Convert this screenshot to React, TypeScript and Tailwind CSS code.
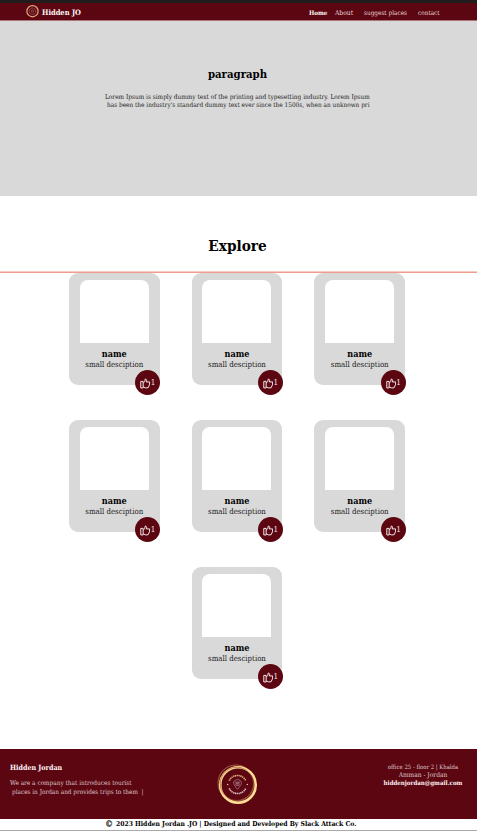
import React from "react";

function ThumbIcon() {
  return (
    <svg viewBox="0 0 20 20" className="h-[11px] w-[10.5px] shrink-0" fill="none" stroke="#f3e6e7" strokeWidth="1.9" strokeLinejoin="round">
      <path d="M1.500 6H6V18.500H1.500ZM6 9L9 6.500L10 1.500C12.500 1.500 13.500 4 12 7H18.500L18 12.500L15.500 18L11 18.500L6 16.500" />
    </svg>
  );
}

function Card() {
  return (
    <article className="relative h-[111.500px] w-[90.500px] rounded-[9px] bg-[#d9d9d9] pt-[7px] text-center">
      <div className="ml-[10.500px] h-[63px] w-[69px] rounded-t-[8px] bg-white" />
      <h3 className="mt-[6px] text-[9px] leading-[11px] font-bold whitespace-nowrap">name</h3>
      <p className="-mt-[1px] text-[7.800px] leading-[11px] whitespace-nowrap text-[#222]">small desciption</p>
      <button className="absolute -right-[0.800px] -bottom-[10px] flex h-[25px] w-[25px] items-center justify-center rounded-full bg-[#5b0611] pt-[2px] text-[8px] leading-none text-[#f3e6e7]">
        <ThumbIcon />
        <span>1</span>
      </button>
    </article>
  );
}

function Seal({ className }: { className: string }) {
  return (
    <svg viewBox="0 0 42 42" className={className} fill="none">
      <circle cx="19.500" cy="19.500" r="18.500" stroke="#b87955" strokeWidth=".8" />
      <circle cx="21.500" cy="21.500" r="18.200" stroke="#ffdc94" strokeWidth="2.700" />
      <circle cx="20.300" cy="20.300" r="17" stroke="#9c5c42" strokeWidth=".7" />
      <path d="M12.500 17A9.500 9.500 0 0 1 29.500 17" stroke="#d9a778" strokeWidth="1.700" strokeDasharray="1.400 .5" />
      <path d="M12.500 25A9.500 9.500 0 0 0 29.500 25" stroke="#d6bcc6" strokeWidth="1.700" strokeDasharray="1.400 .5" />
      <circle cx="11" cy="21" r=".7" fill="#ffdc94" />
      <circle cx="31" cy="21" r=".7" fill="#ffdc94" />
      <path d="M21 26C18.500 22.500 17 21.500 17 19.500C17 14.800 25 14.800 25 19.500C25 21.500 23.500 22.500 21 26ZM18 18L23.500 21M24 18L18.500 21M19 22H23" stroke="#a8747d" strokeWidth=".8" />
      <circle cx="21" cy="19.500" r="1.500" stroke="#a8747d" strokeWidth=".6" />
    </svg>
  );
}

export default function App() {
  return (
    <div className="h-[831px] w-[477px] overflow-hidden bg-white font-['DejaVu_Serif_Condensed','DejaVu_Serif',serif] text-black">
      <header className="flex h-[21px] items-start border-t-[3px] border-b border-t-[#231c1d] border-b-[#a9767c] bg-[#5b0611] pl-[26px] text-[6.500px] whitespace-nowrap text-[#ead9da]">
        <svg viewBox="0 0 13 13" className="mt-[2px] h-[13px] w-[13px]" fill="none">
          <circle cx="6.500" cy="6.200" r="5.600" stroke="#e2ad7c" strokeWidth="1.200" />
          <circle cx="6.500" cy="6.200" r="3.200" stroke="#a8626b" strokeWidth="1" strokeDasharray="1.200 .4" />
          <circle cx="6.500" cy="6.200" r="1.200" stroke="#9b5760" strokeWidth=".9" />
        </svg>
        <strong className="mt-[5px] ml-[3px] w-[267px] text-[7.500px] leading-[10px] text-[#fff6f6]">Hidden JO</strong>
        <nav className="mt-[5px] flex leading-[10px]">
          <strong className="w-[26px] text-[6.200px] text-white">Home</strong>
          <span className="w-[29px] text-[6.700px]">About</span>
          <span className="w-[54px] text-[6.400px]">suggest places</span>
          <span className="text-[6.400px]">contact</span>
        </nav>
      </header>
      <section className="h-[175px] bg-[#d9d9d9] pt-[45px]">
        <h1 className="pr-[2px] text-center text-[11.300px] leading-[16px] font-bold">paragraph</h1>
        <div className="mt-[10.500px] pl-[105px] text-[6.480px] leading-[8px] whitespace-nowrap text-[#202020]">
          <p>Lorem Ipsum is simply dummy text of the printing and typesetting industry. Lorem Ipsum</p>
          <p className="pl-[2px] text-[6.430px]">has been the industry's standard dummy text ever since the 1500s, when an unknown pri</p>
        </div>
      </section>
      <main className="h-[553px] pt-[40px]">
        <h2 className="pr-[2px] text-center text-[15.200px] leading-[20px] font-bold">Explore</h2>
        <div className="relative z-10 mt-[15px] h-[2px] border-t border-[#f9cbc3] bg-[#f09d90]" />
        <div className="ml-[69px] grid w-[336px] grid-cols-3 gap-x-[32.200px] gap-y-[35.500px]">
          <Card /><Card /><Card />
          <Card /><Card /><Card />
          <div className="col-start-2"><Card /></div>
        </div>
      </main>
      <footer>
        <div className="flex h-[69.500px] bg-[#5b0611] text-[6.500px] whitespace-nowrap text-[#dfc8ca]">
          <div className="w-[217px] pt-[14px] pl-[10px]">
            <h3 className="text-[7.100px] leading-[10px] font-bold text-[#fff6f6]">Hidden Jordan</h3>
            <p className="mt-[6px] text-[6.430px] leading-[8px]">We are a company that introduces tourist</p>
            <p className="mt-[0.500px] pl-[2px] text-[6.380px] leading-[8px]">places in Jordan and provides trips to them&nbsp; |</p>
          </div>
          <Seal className="mt-[15px] h-[41px] w-[41px]" />
          <address className="ml-[115px] w-[100px] pt-[14px] text-center leading-[8px] not-italic">
            <p className="text-[5.950px]">office 25 - floor 2 | Khalda</p>
            <p className="text-[6.600px]">Amman - Jordan</p>
            <p className="text-[6.120px] font-bold text-[#fff2f3]">hiddenjordan@gmail.com</p>
          </address>
        </div>
        <div className="flex h-[12.500px] items-center border-b border-[#aaa] pl-[105px] text-[6.780px] leading-[10px] font-bold whitespace-nowrap">
          <span className="w-[11px] text-[9px]">©</span>
          <span>2023 Hidden Jordan .JO | Designed and Developed By Slack Attack Co.</span>
        </div>
      </footer>
    </div>
  );
}
